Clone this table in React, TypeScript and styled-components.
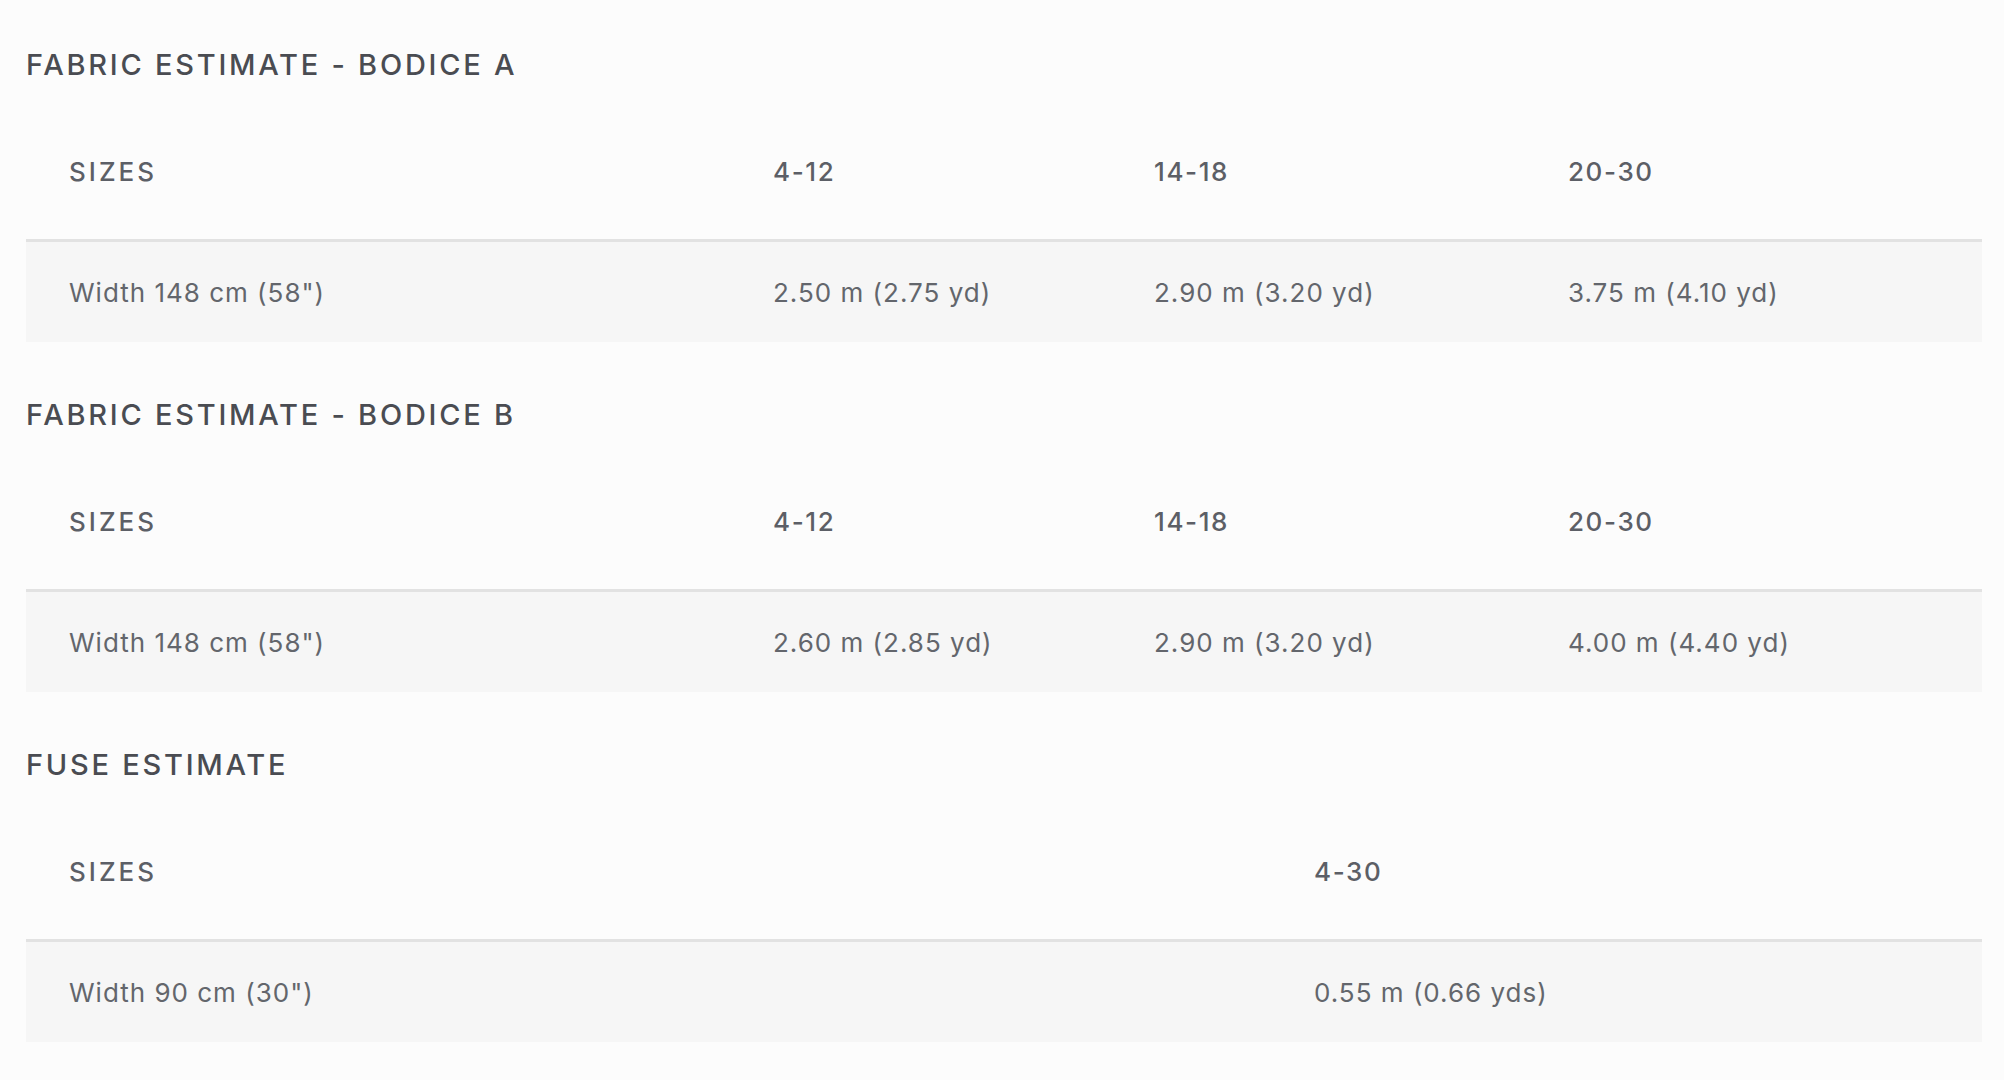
import React from "react";
import styled, { createGlobalStyle } from "styled-components";

const GlobalStyle = createGlobalStyle`
  html, body {
    margin: 0;
    padding: 0;
    background: #fcfcfc;
  }
  body {
    font-family: Inter, "Open Sans", sans-serif;
    -webkit-font-smoothing: antialiased;
  }
`;

const Page = styled.div`
  padding: 44px 22px 40px 26px;
  display: flex;
  flex-direction: column;
  gap: 52px;
`;

const Section = styled.section`
  display: flex;
  flex-direction: column;
  gap: 17px;
`;

const Title = styled.h2`
  margin: 0;
  font-size: 29px;
  line-height: 42px;
  font-weight: 500;
  letter-spacing: 2.75px;
  color: #4a4c52;
  text-transform: uppercase;
`;

const Table = styled.div<{ $cols: string }>`
  display: grid;
  grid-template-columns: ${(p) => p.$cols};
`;

const HeadCell = styled.div<{ $label?: boolean }>`
  height: 136px;
  display: flex;
  align-items: center;
  padding-left: 43px;
  border-bottom: 3px solid #e2e2e2;
  font-size: 26px;
  font-weight: 500;
  letter-spacing: ${(p) => (p.$label ? "3px" : "1.6px")};
  color: #5c5f66;
`;

const DataCell = styled.div`
  height: 100px;
  display: flex;
  align-items: center;
  padding-left: 43px;
  background: #f6f6f6;
  font-size: 26px;
  font-weight: 400;
  letter-spacing: 1px;
  color: #63666c;
`;

interface EstimateProps {
  title: string;
  cols: string;
  sizes: string[];
  label: string;
  values: string[];
}

function Estimate({ title, cols, sizes, label, values }: EstimateProps) {
  return (
    <Section>
      <Title>{title}</Title>
      <Table $cols={cols}>
        <HeadCell $label>SIZES</HeadCell>
        {sizes.map((s) => (
          <HeadCell key={s}>{s}</HeadCell>
        ))}
        <DataCell>{label}</DataCell>
        {values.map((v, i) => (
          <DataCell key={`v-${i}`}>{v}</DataCell>
        ))}
      </Table>
    </Section>
  );
}

const threeCols = "704px 381px 414px 1fr";

export default function App() {
  return (
    <>
      <GlobalStyle />
      <Page>
        <Estimate
          title="Fabric Estimate - Bodice A"
          cols={threeCols}
          sizes={["4-12", "14-18", "20-30"]}
          label={'Width 148 cm (58")'}
          values={["2.50 m (2.75 yd)", "2.90 m (3.20 yd)", "3.75 m (4.10 yd)"]}
        />
        <Estimate
          title="Fabric Estimate - Bodice B"
          cols={threeCols}
          sizes={["4-12", "14-18", "20-30"]}
          label={'Width 148 cm (58")'}
          values={["2.60 m (2.85 yd)", "2.90 m (3.20 yd)", "4.00 m (4.40 yd)"]}
        />
        <Estimate
          title="Fuse Estimate"
          cols="1245px 1fr"
          sizes={["4-30"]}
          label={'Width 90 cm (30")'}
          values={["0.55 m (0.66 yds)"]}
        />
      </Page>
    </>
  );
}
